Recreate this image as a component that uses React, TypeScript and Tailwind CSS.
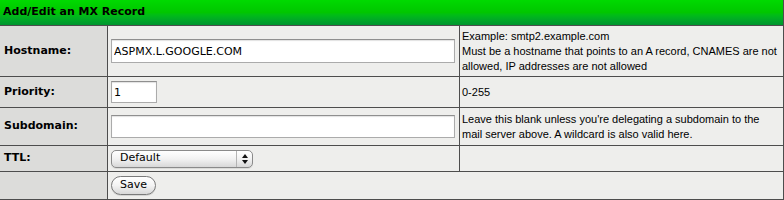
const label = "font-['DejaVu_Sans',sans-serif] text-[11px] font-bold text-black";
const help = "font-['Liberation_Sans',Arial,sans-serif] text-[11px] leading-[15px] text-black";
const field =
  "border border-[#ababab] border-t-[#8f8f8f] bg-white px-[2px] font-['DejaVu_Sans',sans-serif] text-[11px] text-black shadow-[inset_0_1px_1px_rgba(0,0,0,0.12)] outline-none";

function Row({
  height,
  name,
  children,
  note,
  span = false,
}: {
  height: string;
  name?: string;
  children: React.ReactNode;
  note?: React.ReactNode;
  span?: boolean;
}) {
  return (
    <div className={`flex ${height} border-b border-[#4d4d4d]`}>
      <div className={`flex w-[108px] shrink-0 items-center border-r border-[#4d4d4d] bg-[#dcdcda] pl-[4px] ${label}`}>
        {name}
      </div>
      {span ? (
        <div className="flex flex-1 items-center bg-[#eeeeec] pl-[3px]">{children}</div>
      ) : (
        <>
          <div className="flex w-[352px] shrink-0 items-center border-r border-[#4d4d4d] bg-[#eeeeec] pl-[3px]">
            {children}
          </div>
          <div className={`flex flex-1 items-center bg-[#eeeeec] pl-[2px] ${help}`}>
            <div>{note}</div>
          </div>
        </>
      )}
    </div>
  );
}

export default function App() {
  return (
    <div className="w-[784px] border-r border-[#4d4d4d] bg-[#eeeeec]">
      <div
        className={`flex h-[26px] items-center border-b border-[#4d4d4d] bg-gradient-to-b from-[#00da00] via-[#00c600] to-[#00952f] pl-[3px] ${label}`}
      >
        Add/Edit an MX Record
      </div>

      <Row
        height="h-[51px]"
        name="Hostname:"
        note={
          <>
            Example: smtp2.example.com
            <br />
            Must be a hostname that points to an A record, CNAMES are not
            <br />
            allowed, IP addresses are not allowed
          </>
        }
      >
        <input className={`${field} h-[24px] w-[344px]`} defaultValue="ASPMX.L.GOOGLE.COM" />
      </Row>

      <Row height="h-[31px]" name="Priority:" note="0-255">
        <input className={`${field} h-[22px] w-[46px]`} defaultValue="1" />
      </Row>

      <Row
        height="h-[38px]"
        name="Subdomain:"
        note={
          <>
            Leave this blank unless you're delegating a subdomain to the
            <br />
            mail server above. A wildcard is also valid here.
          </>
        }
      >
        <input className={`${field} h-[23px] w-[344px]`} defaultValue="" />
      </Row>

      <Row height="h-[26px]" name="TTL:" note="">
        <div className="flex h-[18px] w-[142px] rounded-[5px] border border-[#8a8a8a] bg-gradient-to-b from-white via-[#f2f2f2] to-[#d8d8d8] shadow-[0_1px_0_rgba(0,0,0,0.08)]">
          <div className="flex flex-1 items-center pl-[8px] font-['DejaVu_Sans',sans-serif] text-[11px] text-black">
            Default
          </div>
          <div className="flex w-[16px] flex-col items-center justify-center gap-[2px] border-l border-[#b4b4b4]">
            <svg width="6" height="4" viewBox="0 0 6 4">
              <path d="M3 0 L6 4 L0 4 Z" fill="#111" />
            </svg>
            <svg width="6" height="4" viewBox="0 0 6 4">
              <path d="M0 0 L6 0 L3 4 Z" fill="#111" />
            </svg>
          </div>
        </div>
      </Row>

      <Row height="h-[28px]" span>
        <button className="flex h-[19px] w-[45px] items-center justify-center rounded-full border border-[#7a7a7a] bg-gradient-to-b from-white via-[#f3f3f3] to-[#d8d8d8] font-['DejaVu_Sans',sans-serif] text-[11px] text-black shadow-[0_1px_0_rgba(0,0,0,0.1)]">
          Save
        </button>
      </Row>
    </div>
  );
}
